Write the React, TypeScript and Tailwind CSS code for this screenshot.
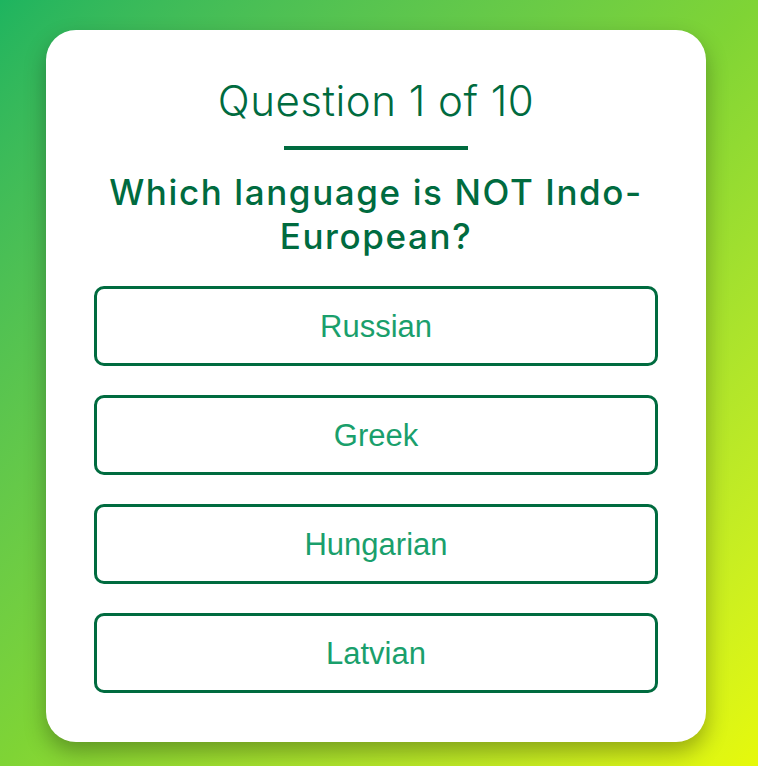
import React from 'react';

const answers = ['Russian', 'Greek', 'Hungarian', 'Latvian'];

export default function App() {
  return (
    <div className="min-h-[766px] w-full bg-gradient-to-br from-[#1db45f] via-[#7fd435] to-[#e6f90a] pt-[30px] pb-6">
      <div className="ml-[46px] w-[660px] rounded-[30px] bg-white px-[48px] pt-[41px] pb-[49px] shadow-[0_10px_22px_rgba(0,0,0,0.3)]">
        <h1 className="text-center font-['Inter',sans-serif] text-[42px] font-light tracking-[0.5px] leading-[60px] text-[#006b3f]">
          Question 1 of 10
        </h1>
        <div className="mx-auto mt-[15px] h-[4px] w-[184px] bg-[#006b3f]" />
        <h2 className="mt-[20px] text-center font-['Inter',sans-serif] text-[35px] font-medium tracking-[1.6px] leading-[44px] text-[#006b3f]">
          Which language is NOT Indo-European?
        </h2>
        <div className="mt-[28px] flex flex-col gap-[29px]">
          {answers.map((a) => (
            <button
              key={a}
              className="flex h-[80px] w-full items-center justify-center rounded-[10px] border-[3px] border-[#006b3f] bg-white pt-[2px] font-['Liberation_Sans',Arial,sans-serif] text-[31px] text-[#1a9f6c]"
            >
              {a}
            </button>
          ))}
        </div>
      </div>
    </div>
  );
}
